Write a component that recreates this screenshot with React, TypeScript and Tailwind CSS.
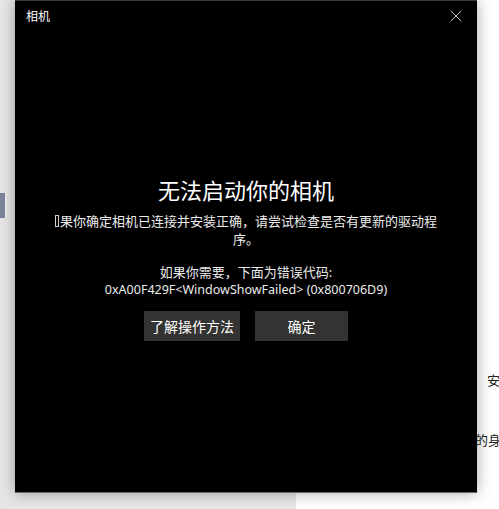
import { X } from "lucide-react";

const font = { fontFamily: '"Noto Sans", "Noto Sans CJK SC", sans-serif' };

export default function App() {
  return (
    <div className="w-[499px] h-[509px] overflow-hidden flex flex-col bg-white" style={font}>
      <div className="flex h-[493px]">
        {/* background page, left */}
        <div className="w-[15px] bg-[#e6e6e6] pt-[193px]">
          <div className="w-[6px] h-[25px] bg-[#7b8599] border-r border-[#f4f4f4]" />
        </div>

        {/* camera window */}
        <div className="relative z-10 w-[462px] flex flex-col bg-black border-t border-[#3c3c3c] border-b border-b-[#6a6a6a] shadow-[0_0_14px_rgba(0,0,0,0.35)]">
          <div className="flex items-center justify-between h-[31px] pl-[11px] pr-[11px]">
            <span className="text-[12px] text-white">相机</span>
            <X className="w-[20px] h-[20px] text-[#d8d8d8] -mt-[1px]" strokeWidth={1.1} />
          </div>

          <div className="flex flex-col items-center pt-[143px] text-white">
            <h1 className="text-[22px] leading-[30px]">无法启动你的相机</h1>
            <p className="mt-[7px] w-[390px] text-center text-[13px] leading-[18px] text-[#ececec]">
              <span className="inline-block w-[4px] h-[12px] border border-[#cfcfcf] mr-[1px] align-[-1px]" />
              果你确定相机已连接并安装正确，请尝试检查是否有更新的驱动程序。
            </p>
            <p className="mt-[16px] text-center text-[13px] leading-[17px] text-[#ececec]">
              如果你需要，下面为错误代码:
              <br />
              <span className="text-[12.5px]">0xA00F429F&lt;WindowShowFailed&gt; (0x800706D9)</span>
            </p>
            <div className="flex gap-[15px] mt-[13px]">
              <button className="w-[96px] h-[30px] bg-[#333333] text-[14px] text-white">了解操作方法</button>
              <button className="w-[93px] h-[30px] bg-[#333333] text-[14px] text-white">确定</button>
            </div>
          </div>
        </div>

        {/* background page, right */}
        <div className="flex-1 overflow-hidden text-[13px] text-[#222] pt-[371px]">
          <div className="pl-[10px] leading-[18px]">安</div>
          <div className="mt-[42px] -ml-[2px] leading-[18px] whitespace-nowrap">的身</div>
        </div>
      </div>

      <div className="flex flex-1">
        <div className="w-[296px] bg-[#e6e6e6]" />
        <div className="flex-1 bg-white" />
      </div>
    </div>
  );
}
